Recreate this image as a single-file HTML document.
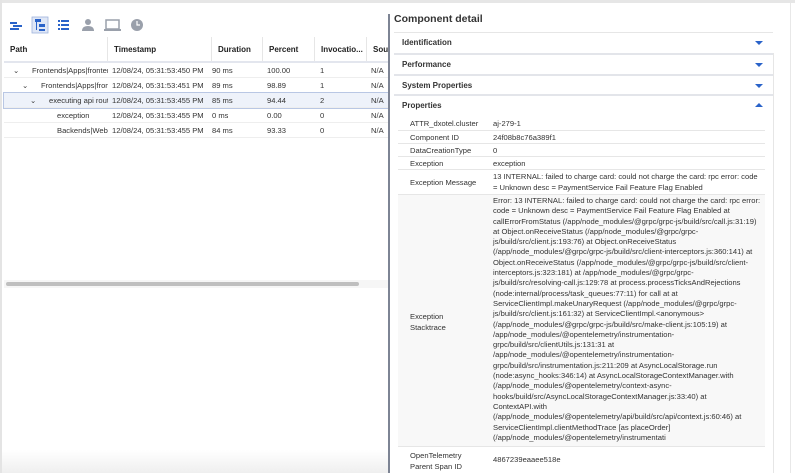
<!DOCTYPE html>
<html><head><meta charset="utf-8"><style>
*{margin:0;padding:0;box-sizing:border-box}
body{width:795px;height:473px;background:#fff;font-family:"Liberation Sans",sans-serif;color:#333;position:relative;overflow:hidden;font-size:8px}
.abs{position:absolute}
.top{left:0;top:0;width:795px;height:3px;background:#e6e6e6}
.lb{left:0;top:0;width:2px;height:473px;background:#e4e4e4}
.sep{left:388px;top:14px;width:2px;height:459px;background:#7d8494}
.rb{left:790px;top:3px;width:1px;height:470px;background:#e8e8e8}
.th{position:absolute;top:37px;height:25px;line-height:25px;font-weight:bold;font-size:8px;color:#222;padding-left:6px;border-right:1px solid #e6e6e6;background:#fff}
.hdrline{left:4px;top:61px;width:384px;height:2px;background:#e3e6ee}
.row{position:absolute;left:4px;width:384px;height:15px;line-height:15px;border-bottom:1px solid #eee;font-size:7.6px;color:#333}
.row span{position:absolute;white-space:nowrap;overflow:hidden}
.sel{background:#eef2fa;outline:1px solid #b9c7e4}
.acc{position:absolute;left:394px;width:379px;height:20px;line-height:20px;font-weight:bold;font-size:8px;padding-left:8px;border-top:1px solid #e6e6e6;color:#333}
.tri{position:absolute;right:10px;top:8px;width:0;height:0;border-left:4px solid transparent;border-right:4px solid transparent;border-top:4px solid #2a63c9}
.up{border-top:none;border-bottom:4px solid #2a63c9;top:7px}
.pr{position:absolute;left:398px;width:367px;border-bottom:1px solid #e6e6e6;font-size:7.6px;color:#333}
.pr .k{position:absolute;left:12px;white-space:nowrap}
.pr .v{position:absolute;left:95px;width:272px;white-space:nowrap}
</style></head><body>
<div class="abs top"></div><div class="abs lb"></div><div class="abs rb"></div>
<svg class="abs" style="left:6px;top:14px" width="140" height="20">
<g fill="#2a63c9"><rect x="4" y="8" width="7" height="2"/><rect x="7" y="11" width="9" height="2"/><rect x="4" y="14" width="9" height="2"/></g>
<rect x="26" y="3" width="16" height="16" fill="#dfe7f6" stroke="#9fb4dc" stroke-width="0.8"/>
<g fill="#2a63c9"><rect x="29" y="5" width="6" height="3"/><rect x="33" y="10" width="6" height="3"/><rect x="33" y="15" width="6" height="2"/><rect x="30" y="8" width="1" height="8"/></g>
<g fill="#2a63c9"><rect x="52" y="6" width="2" height="2"/><rect x="55" y="6" width="8" height="2"/><rect x="52" y="10" width="2" height="2"/><rect x="55" y="10" width="8" height="2"/><rect x="52" y="14" width="2" height="2"/><rect x="55" y="14" width="8" height="2"/></g>
<g fill="#9aa0ab"><circle cx="82" cy="8" r="3"/><path d="M76 17 Q76 12 82 12 Q88 12 88 17Z"/></g>
<rect x="100" y="6" width="13" height="9" fill="none" stroke="#9aa0ab" stroke-width="1.5"/><rect x="98" y="15" width="17" height="2" fill="#9aa0ab"/>
<circle cx="131" cy="11" r="6" fill="#9aa0ab"/><path d="M131 7v4h3" stroke="#fff" stroke-width="1.2" fill="none"/>
</svg>
<div class="th" style="left:4px;width:104px">Path</div>
<div class="th" style="left:108px;width:104px">Timestamp</div>
<div class="th" style="left:212px;width:51px">Duration</div>
<div class="th" style="left:263px;width:52px">Percent</div>
<div class="th" style="left:315px;width:52px">Invocatio...</div>
<div class="th" style="left:367px;width:21px;overflow:hidden;border-right:none">Sour</div>
<div class="abs hdrline"></div>
<div class="row" style="top:63px"><span style="left:9px">⌄</span><span style="left:28px;width:76px">Frontends|Apps|frontend</span><span style="left:108px">12/08/24, 05:31:53:450 PM</span><span style="left:208px">90 ms</span><span style="left:263px">100.00</span><span style="left:316px">1</span><span style="left:367px">N/A</span></div>
<div class="row" style="top:78px"><span style="left:18px">⌄</span><span style="left:37px;width:67px">Frontends|Apps|frontend</span><span style="left:108px">12/08/24, 05:31:53:451 PM</span><span style="left:208px">89 ms</span><span style="left:263px">98.89</span><span style="left:316px">1</span><span style="left:367px">N/A</span></div>
<div class="row sel" style="top:93px"><span style="left:26px">⌄</span><span style="left:45px;width:59px">executing api route</span><span style="left:108px">12/08/24, 05:31:53:455 PM</span><span style="left:208px">85 ms</span><span style="left:263px">94.44</span><span style="left:316px">2</span><span style="left:367px">N/A</span></div>
<div class="row" style="top:108px"><span style="left:53px">exception</span><span style="left:108px">12/08/24, 05:31:53:455 PM</span><span style="left:208px">0 ms</span><span style="left:263px">0.00</span><span style="left:316px">0</span><span style="left:367px">N/A</span></div>
<div class="row" style="top:123px"><span style="left:53px;width:51px">Backends|WebService</span><span style="left:108px">12/08/24, 05:31:53:455 PM</span><span style="left:208px">84 ms</span><span style="left:263px">93.33</span><span style="left:316px">0</span><span style="left:367px">N/A</span></div>
<div class="abs" style="left:4px;top:280px;width:384px;height:8px;background:#f6f6f6"></div>
<div class="abs" style="left:6px;top:282px;width:353px;height:4px;border-radius:2px;background:#bfbfbf"></div>
<div class="abs" style="left:2px;top:450px;width:386px;height:23px;background:linear-gradient(#fff,#efefef)"></div>
<div class="abs sep"></div>
<div class="abs" style="left:394px;top:13px;font-weight:bold;font-size:10.5px;color:#333">Component detail</div>
<div class="acc" style="top:32px">Identification<div class="tri"></div></div>
<div class="acc" style="top:53px;border-top:2px solid #e3e5ea">Performance<div class="tri"></div></div>
<div class="acc" style="top:74px;border-top:2px solid #e3e5ea">System Properties<div class="tri"></div></div>
<div class="acc" style="top:94px;border-top:2px solid #e3e5ea">Properties<div class="tri up"></div></div>
<div class="abs" style="left:773px;top:53px;width:1px;height:420px;background:#e6e6e6"></div>
<div class="pr" style="top:117px;height:14px;line-height:13px"><span class="k">ATTR_dxotel.cluster</span><span class="v">aj-279-1</span></div>
<div class="pr" style="top:131px;height:13px;line-height:13px"><span class="k">Component ID</span><span class="v">24f08b8c76a389f1</span></div>
<div class="pr" style="top:144px;height:13px;line-height:13px"><span class="k">DataCreationType</span><span class="v">0</span></div>
<div class="pr" style="top:157px;height:13px;line-height:13px"><span class="k">Exception</span><span class="v">exception</span></div>
<div class="pr" style="top:170px;height:25px"><span class="k" style="top:7px;line-height:11px">Exception Message</span><span class="v" style="top:1px;line-height:11px">13 INTERNAL: failed to charge card: could not charge the card: rpc error: code<br>= Unknown desc = PaymentService Fail Feature Flag Enabled</span></div>
<div class="pr" style="top:195px;height:252px;background:#f8f8f8"><span class="k" style="top:116px;line-height:11px">Exception<br>Stacktrace</span><span class="v" style="top:1px;line-height:10.3px">Error: 13 INTERNAL: failed to charge card: could not charge the card: rpc error:<br>code = Unknown desc = PaymentService Fail Feature Flag Enabled at<br>callErrorFromStatus (/app/node_modules/@grpc/grpc-js/build/src/call.js:31:19)<br>at Object.onReceiveStatus (/app/node_modules/@grpc/grpc-<br>js/build/src/client.js:193:76) at Object.onReceiveStatus<br>(/app/node_modules/@grpc/grpc-js/build/src/client-interceptors.js:360:141) at<br>Object.onReceiveStatus (/app/node_modules/@grpc/grpc-js/build/src/client-<br>interceptors.js:323:181) at /app/node_modules/@grpc/grpc-<br>js/build/src/resolving-call.js:129:78 at process.processTicksAndRejections<br>(node:internal/process/task_queues:77:11) for call at at<br>ServiceClientImpl.makeUnaryRequest (/app/node_modules/@grpc/grpc-<br>js/build/src/client.js:161:32) at ServiceClientImpl.&lt;anonymous&gt;<br>(/app/node_modules/@grpc/grpc-js/build/src/make-client.js:105:19) at<br>/app/node_modules/@opentelemetry/instrumentation-<br>grpc/build/src/clientUtils.js:131:31 at<br>/app/node_modules/@opentelemetry/instrumentation-<br>grpc/build/src/instrumentation.js:211:209 at AsyncLocalStorage.run<br>(node:async_hooks:346:14) at AsyncLocalStorageContextManager.with<br>(/app/node_modules/@opentelemetry/context-async-<br>hooks/build/src/AsyncLocalStorageContextManager.js:33:40) at<br>ContextAPI.with<br>(/app/node_modules/@opentelemetry/api/build/src/api/context.js:60:46) at<br>ServiceClientImpl.clientMethodTrace [as placeOrder]<br>(/app/node_modules/@opentelemetry/instrumentati</span></div>
<div class="pr" style="top:447px;height:26px;border-bottom:none"><span class="k" style="top:3px;line-height:11px">OpenTelemetry<br>Parent Span ID</span><span class="v" style="top:8px">4867239eaaee518e</span></div>
</body></html>
